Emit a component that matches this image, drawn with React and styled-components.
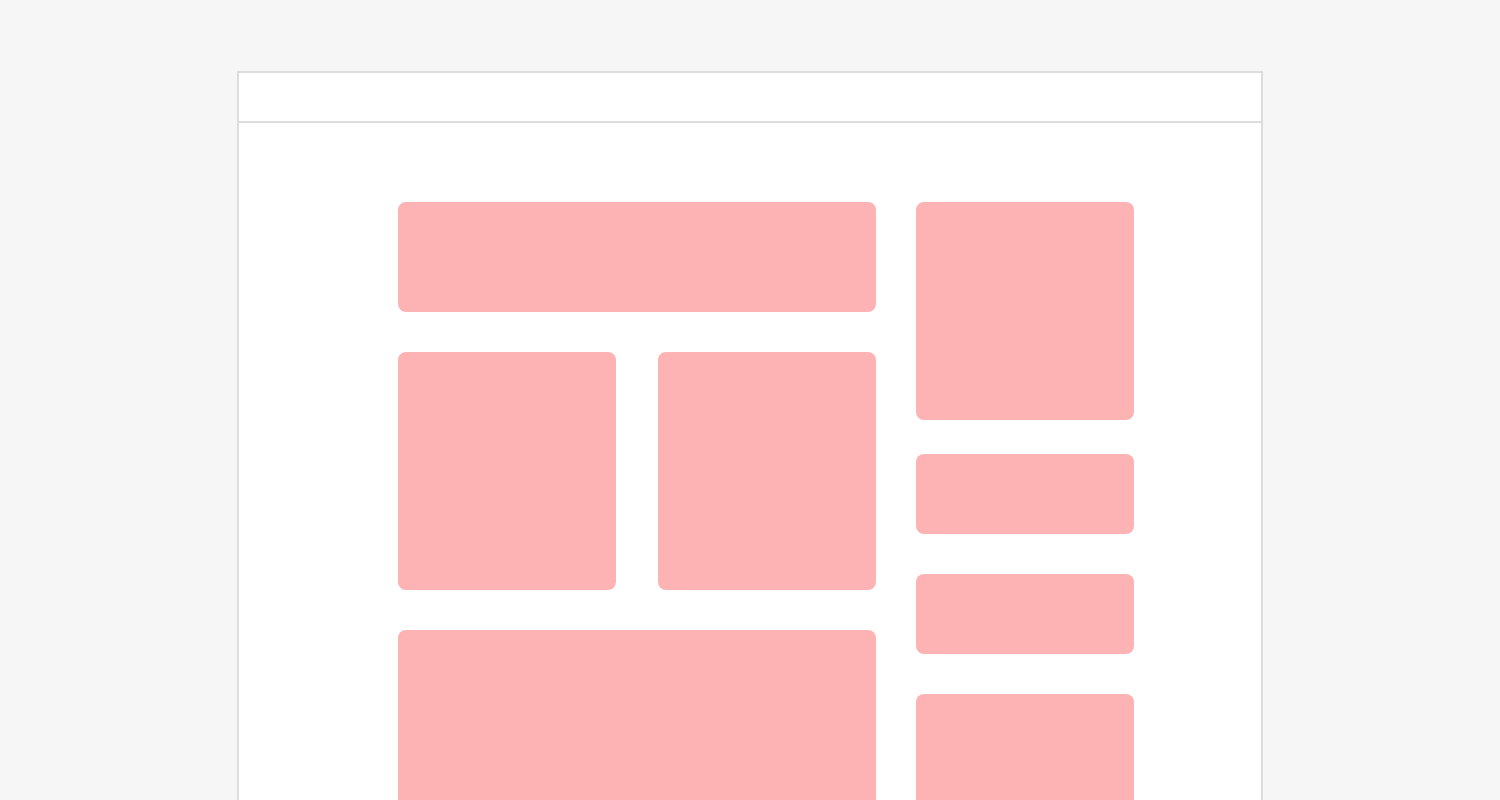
import styled, { createGlobalStyle } from 'styled-components'

const GlobalStyle = createGlobalStyle`
    body {
        margin: 0;
        background: #f6f6f6;
        font-family: "Liberation Sans", Arial, sans-serif;
        overflow: hidden;
    }
`

const Frame = styled.div`
    width: 1022px;
    margin: 71px auto 0;
    background: #fff;
    border: 2px solid #dddddd;
    min-height: 900px;
`

const Header = styled.div`
    height: 48px;
    border-bottom: 2px solid #dddddd;
`

const Content = styled.div`
    display: flex;
    gap: 40px;
    padding: 79px 0 0 159px;
`

const Column = styled.div`
    display: flex;
    flex-direction: column;
    gap: 40px;
    width: ${p => p.$width}px;
`

const Row = styled.div`
    display: flex;
    justify-content: space-between;
`

const Block = styled.div`
    background: #fdb3b3;
    border-radius: 8px;
    width: ${p => (p.$width ? `${p.$width}px` : '100%')};
    height: ${p => p.$height}px;
    margin-bottom: ${p => p.$after || 0}px;
`

export default function App() {
    return (
        <>
            <GlobalStyle />
            <Frame>
                <Header />
                <Content>
                    <Column $width={478}>
                        <Block $height={110} />
                        <Row>
                            <Block $width={218} $height={238} />
                            <Block $width={218} $height={238} />
                        </Row>
                        <Block $height={300} />
                    </Column>
                    <Column $width={218}>
                        <Block $height={218} $after={-6} />
                        <Block $height={80} />
                        <Block $height={80} />
                        <Block $height={200} />
                    </Column>
                </Content>
            </Frame>
        </>
    )
}
